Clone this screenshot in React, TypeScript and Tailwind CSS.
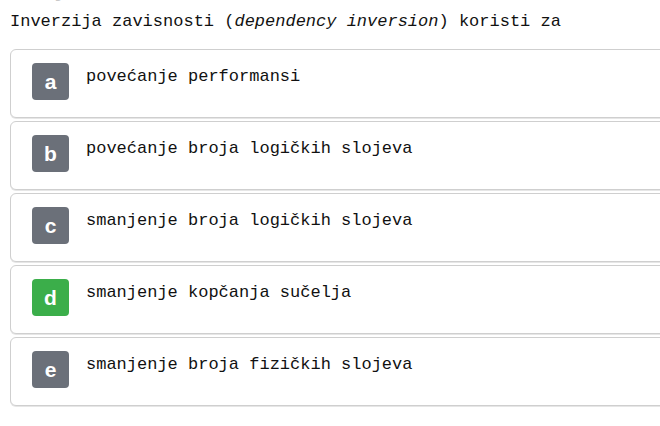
const options = [
  { key: "a", text: "povećanje performansi", correct: false },
  { key: "b", text: "povećanje broja logičkih slojeva", correct: false },
  { key: "c", text: "smanjenje broja logičkih slojeva", correct: false },
  { key: "d", text: "smanjenje kopčanja sučelja", correct: true },
  { key: "e", text: "smanjenje broja fizičkih slojeva", correct: false },
];

export default function App() {
  return (
    <div className="h-[426px] w-[660px] overflow-hidden bg-white pl-[10px] font-['Liberation_Mono',monospace] text-[#111]">
      <div className="h-[4px] overflow-hidden">
        <div className="-mt-[14px] text-[15px] leading-[18px] text-[#c8c8c8]">Pitanje 12.</div>
      </div>
      <div className="mt-[6px] text-[17px] leading-6">
        Inverzija zavisnosti (<em>dependency inversion</em>) koristi za
      </div>
      <div className="mt-[15px] flex w-[700px] flex-col gap-[3px]">
        {options.map((o) => (
          <div
            key={o.key}
            className="flex h-[69px] items-start gap-[17px] rounded-md border border-[#cfcfcf] bg-white pl-[21px] pt-[13px] shadow-[0_1px_0_#e6e6e6]"
          >
            <div
              className={
                "flex h-[37px] w-[37px] shrink-0 items-center justify-center rounded-[4px] font-['Liberation_Sans',sans-serif] text-[21px] font-bold text-white " +
                (o.correct ? "bg-[#3bae4a]" : "bg-[#6b7079]")
              }
            >
              {o.key}
            </div>
            <div className="pt-[2px] text-[17px] leading-6">{o.text}</div>
          </div>
        ))}
      </div>
    </div>
  );
}
